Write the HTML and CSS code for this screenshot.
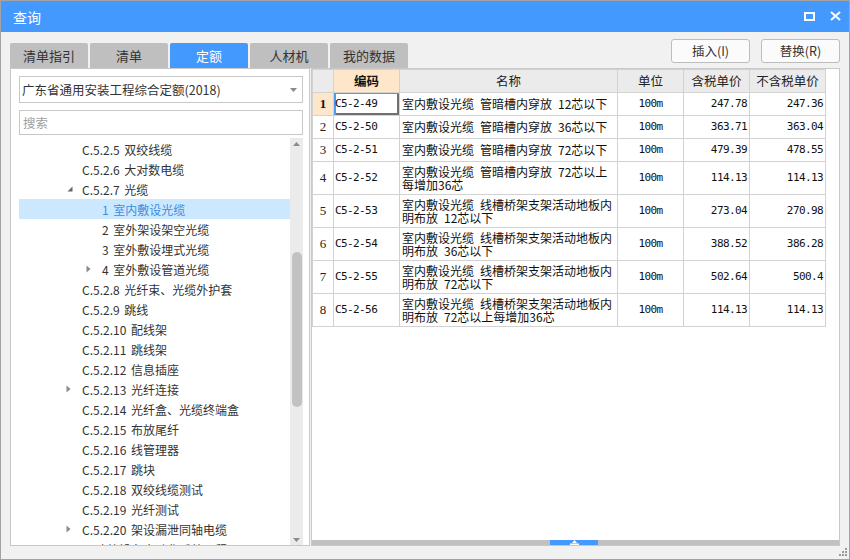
FILE: index.html
```html
<!DOCTYPE html>
<html lang="zh">
<head>
<meta charset="utf-8">
<title>查询</title>
<link rel="stylesheet" href="styles.css">
</head>
<body>
<div class="window">
  <div class="titlebar">
    <span class="title">查询</span>
    <div class="win-ctrls">
      <svg class="ic-max" width="11" height="9" viewBox="0 0 11 9"><rect x="1" y="1" width="9" height="7" fill="none" stroke="#fff" stroke-width="2"/></svg>
      <svg class="ic-close" width="11" height="10" viewBox="0 0 11 10"><path d="M1 1 L10 9 M10 1 L1 9" stroke="#fff" stroke-width="2" fill="none"/></svg>
    </div>
  </div>
  <div class="toolbar">
    <div class="tabs">
      <div class="tab">清单指引</div>
      <div class="tab">清单</div>
      <div class="tab active">定额</div>
      <div class="tab">人材机</div>
      <div class="tab">我的数据</div>
    </div>
    <div class="buttons">
      <div class="btn">插入(I)</div>
      <div class="btn">替换(R)</div>
    </div>
  </div>
  <div class="main">
    <div class="left-panel">
      <div class="combo">
        <span>广东省通用安装工程综合定额(2018)</span>
        <svg class="combo-arrow" width="7" height="4" viewBox="0 0 7 4"><path d="M0 0 H7 L3.5 4 Z" fill="#8a8a8a"/></svg>
      </div>
      <div class="search"><span>搜索</span></div>
      <div class="tree">
        <div class="tree-list">
          <div class="row lv3"><i class="arrow"></i><span>C.5.2.5 双绞线缆</span></div>
          <div class="row lv3"><i class="arrow"></i><span>C.5.2.6 大对数电缆</span></div>
          <div class="row lv3"><i class="arrow"><svg width="6" height="6" viewBox="0 0 6 6"><path d="M5.5 0.5 V5.5 H0.5 Z" fill="#666"/></svg></i><span>C.5.2.7 光缆</span></div>
          <div class="row lv4 selected"><i class="arrow"></i><span>1 室内敷设光缆</span></div>
          <div class="row lv4"><i class="arrow"></i><span>2 室外架设架空光缆</span></div>
          <div class="row lv4"><i class="arrow"></i><span>3 室外敷设埋式光缆</span></div>
          <div class="row lv4"><i class="arrow"><svg class="col" width="5" height="8" viewBox="0 0 5 8"><path d="M0.5 0.5 L4.5 4 L0.5 7.5 Z" fill="#8a8a8a"/></svg></i><span>4 室外敷设管道光缆</span></div>
          <div class="row lv3"><i class="arrow"></i><span>C.5.2.8 光纤束、光缆外护套</span></div>
          <div class="row lv3"><i class="arrow"></i><span>C.5.2.9 跳线</span></div>
          <div class="row lv3"><i class="arrow"></i><span>C.5.2.10 配线架</span></div>
          <div class="row lv3"><i class="arrow"></i><span>C.5.2.11 跳线架</span></div>
          <div class="row lv3"><i class="arrow"></i><span>C.5.2.12 信息插座</span></div>
          <div class="row lv3"><i class="arrow"><svg class="col" width="5" height="8" viewBox="0 0 5 8"><path d="M0.5 0.5 L4.5 4 L0.5 7.5 Z" fill="#8a8a8a"/></svg></i><span>C.5.2.13 光纤连接</span></div>
          <div class="row lv3"><i class="arrow"></i><span>C.5.2.14 光纤盒、光缆终端盒</span></div>
          <div class="row lv3"><i class="arrow"></i><span>C.5.2.15 布放尾纤</span></div>
          <div class="row lv3"><i class="arrow"></i><span>C.5.2.16 线管理器</span></div>
          <div class="row lv3"><i class="arrow"></i><span>C.5.2.17 跳块</span></div>
          <div class="row lv3"><i class="arrow"></i><span>C.5.2.18 双绞线缆测试</span></div>
          <div class="row lv3"><i class="arrow"></i><span>C.5.2.19 光纤测试</span></div>
          <div class="row lv3"><i class="arrow"><svg class="col" width="5" height="8" viewBox="0 0 5 8"><path d="M0.5 0.5 L4.5 4 L0.5 7.5 Z" fill="#8a8a8a"/></svg></i><span>C.5.2.20 架设漏泄同轴电缆</span></div>
          <div class="row lv2"><i class="arrow"></i><span>C.5.3 建筑设备自动化系统工程</span></div>
        </div>
        <div class="vscroll">
          <svg class="sb-arrow" width="7" height="4" viewBox="0 0 7 4"><path d="M0 4 H7 L3.5 0 Z" fill="#8a8a8a"/></svg>
          <div class="sb-track"><div class="sb-thumb"></div></div>
          <svg class="sb-arrow" width="7" height="4" viewBox="0 0 7 4"><path d="M0 0 H7 L3.5 4 Z" fill="#8a8a8a"/></svg>
        </div>
      </div>
    </div>
    <div class="right-panel">
      <div class="grid-area">
        <table class="grid">
          <colgroup>
            <col class="c-no"><col class="c-code"><col class="c-name"><col class="c-unit"><col class="c-price"><col class="c-price2">
          </colgroup>
          <thead>
            <tr>
              <th class="corner"></th>
              <th class="hl">编码</th>
              <th>名称</th>
              <th>单位</th>
              <th>含税单价</th>
              <th>不含税单价</th>
            </tr>
          </thead>
          <tbody>
            <tr>
              <td class="no hl">1</td>
              <td class="code focus">C5-2-49</td>
              <td class="name">室内敷设光缆&ensp;管暗槽内穿放&ensp;12芯以下</td>
              <td class="unit">100m</td>
              <td class="num">247.78</td>
              <td class="num">247.36</td>
            </tr>
            <tr>
              <td class="no">2</td>
              <td class="code">C5-2-50</td>
              <td class="name">室内敷设光缆&ensp;管暗槽内穿放&ensp;36芯以下</td>
              <td class="unit">100m</td>
              <td class="num">363.71</td>
              <td class="num">363.04</td>
            </tr>
            <tr>
              <td class="no">3</td>
              <td class="code">C5-2-51</td>
              <td class="name">室内敷设光缆&ensp;管暗槽内穿放&ensp;72芯以下</td>
              <td class="unit">100m</td>
              <td class="num">479.39</td>
              <td class="num">478.55</td>
            </tr>
            <tr class="tall">
              <td class="no">4</td>
              <td class="code">C5-2-52</td>
              <td class="name"><div class="l">室内敷设光缆&ensp;管暗槽内穿放&ensp;72芯以上</div><div class="l">每增加36芯</div></td>
              <td class="unit">100m</td>
              <td class="num">114.13</td>
              <td class="num">114.13</td>
            </tr>
            <tr class="tall">
              <td class="no">5</td>
              <td class="code">C5-2-53</td>
              <td class="name"><div class="l">室内敷设光缆&ensp;线槽桥架支架活动地板内</div><div class="l">明布放&ensp;12芯以下</div></td>
              <td class="unit">100m</td>
              <td class="num">273.04</td>
              <td class="num">270.98</td>
            </tr>
            <tr class="tall">
              <td class="no">6</td>
              <td class="code">C5-2-54</td>
              <td class="name"><div class="l">室内敷设光缆&ensp;线槽桥架支架活动地板内</div><div class="l">明布放&ensp;36芯以下</div></td>
              <td class="unit">100m</td>
              <td class="num">388.52</td>
              <td class="num">386.28</td>
            </tr>
            <tr class="tall">
              <td class="no">7</td>
              <td class="code">C5-2-55</td>
              <td class="name"><div class="l">室内敷设光缆&ensp;线槽桥架支架活动地板内</div><div class="l">明布放&ensp;72芯以下</div></td>
              <td class="unit">100m</td>
              <td class="num">502.64</td>
              <td class="num">500.4</td>
            </tr>
            <tr class="tall">
              <td class="no">8</td>
              <td class="code">C5-2-56</td>
              <td class="name"><div class="l">室内敷设光缆&ensp;线槽桥架支架活动地板内</div><div class="l">明布放&ensp;72芯以上每增加36芯</div></td>
              <td class="unit">100m</td>
              <td class="num">114.13</td>
              <td class="num">114.13</td>
            </tr>
          </tbody>
        </table>
      </div>
      <div class="hbar">
        <div class="handle">
          <svg width="9" height="5" viewBox="0 0 9 5"><path d="M4.5 0 L7 3 H2 Z M0 3.5 H9 V5 H0 Z" fill="#fff"/></svg>
        </div>
      </div>
    </div>
  </div>
  <div class="footer">
    <svg class="grip" width="9" height="9" viewBox="0 0 9 9">
      <rect x="6" y="0" width="2" height="2" fill="#9a9a9a"/>
      <rect x="3" y="3" width="2" height="2" fill="#9a9a9a"/>
      <rect x="6" y="3" width="2" height="2" fill="#9a9a9a"/>
      <rect x="0" y="6" width="2" height="2" fill="#9a9a9a"/>
      <rect x="3" y="6" width="2" height="2" fill="#9a9a9a"/>
      <rect x="6" y="6" width="2" height="2" fill="#9a9a9a"/>
    </svg>
  </div>
</div>
</body>
</html>
```

FILE: styles.css
```css
* { box-sizing: border-box; }
html, body { margin: 0; padding: 0; }
body {
  width: 850px;
  height: 560px;
  overflow: hidden;
  font-family: "Noto Sans CJK SC", "Noto Sans", sans-serif;
  font-size: 12px;
  color: #333;
  background: #f0f0f0;
}
.window {
  width: 850px;
  height: 560px;
  border: 1px solid #a3a3a3;
  background: #f1f1f1;
  display: flex;
  flex-direction: column;
}
.titlebar {
  height: 31px;
  flex: none;
  background: #4499ff;
  display: flex;
  align-items: center;
  padding: 0 8px 0 12px;
}
.title {
  color: #fff;
  font-size: 14px;
  line-height: 20px;
}
.win-ctrls {
  margin-left: auto;
  display: flex;
  align-items: center;
  gap: 15px;
  margin-top: -1px;
}
.toolbar {
  height: 36px;
  flex: none;
  display: flex;
  align-items: flex-start;
  padding: 0 9px;
}
.tabs {
  display: flex;
  gap: 2px;
  margin-top: 11px;
}
.tab {
  width: 78px;
  height: 25px;
  background: #bfbfbf;
  border-radius: 2px 2px 0 0;
  color: #333;
  font-size: 13px;
  line-height: 25px;
  text-align: center;
}
.tab.active {
  background: #4499ff;
  color: #fff;
}
.buttons {
  margin-left: auto;
  margin-top: 7px;
  display: flex;
  gap: 11px;
}
.btn {
  width: 79px;
  height: 24px;
  border: 1px solid #bdbdbd;
  border-radius: 3px;
  background: #fbfbfb;
  text-align: center;
  line-height: 22px;
  font-size: 12.5px;
  color: #333;
}
.main {
  height: 478px;
  flex: none;
  display: flex;
  padding: 0 9px;
  gap: 1px;
}
.left-panel {
  width: 300px;
  height: 478px;
  border: 1px solid #c8c8c8;
  background: #fff;
  padding: 7px 6px 0 8px;
  display: flex;
  flex-direction: column;
}
.combo {
  height: 27px;
  flex: none;
  border: 1px solid #c8c8c8;
  display: flex;
  align-items: center;
  padding: 0 5px 0 2px;
  font-size: 12.5px;
  color: #333;
}
.combo-arrow { margin-left: auto; }
.search {
  height: 25px;
  flex: none;
  margin-top: 7px;
  border: 1px solid #c8c8c8;
  display: flex;
  align-items: center;
  padding-left: 3px;
  color: #a0a0a0;
  font-size: 12.5px;
}
.tree {
  flex: 1;
  margin-top: 3px;
  display: flex;
  min-height: 0;
  overflow: hidden;
}
.tree-list {
  flex: 1;
  padding-top: 1px;
  overflow: hidden;
}
.row {
  height: 20px;
  display: flex;
  align-items: center;
  white-space: nowrap;
  color: #333;
  font-size: 12px;
  word-spacing: 2px;
}
.row.lv2 { padding-left: 28px; }
.row.lv3 { padding-left: 47px; }
.row.lv4 { padding-left: 67px; }
.row.selected {
  background: #cce8ff;
  color: #3b8de0;
}
.arrow {
  width: 16px;
  height: 20px;
  flex: none;
  display: flex;
  align-items: center;
  padding-left: 1px;
}
.arrow .col { margin-left: -1px; }
.vscroll {
  width: 13px;
  flex: none;
  background: #ebebeb;
  display: flex;
  flex-direction: column;
  align-items: center;
  padding: 4px 0 3px;
}
.sb-arrow { flex: none; }
.sb-track {
  flex: 1;
  width: 100%;
  padding: 0 1px 0 2px;
}
.sb-thumb {
  margin-top: 106px;
  height: 155px;
  background: #c2c2c2;
  border-radius: 5px;
}
.right-panel {
  width: 529px;
  height: 478px;
  border: 1px solid #c8c8c8;
  background: #fff;
  display: flex;
  flex-direction: column;
}
.grid-area {
  flex: 1;
  overflow: hidden;
}
.grid {
  border-collapse: collapse;
  table-layout: fixed;
  width: 513px;
  font-size: 12px;
  color: #111;
}
.c-no { width: 21px; }
.c-code { width: 66px; }
.c-name { width: 218px; }
.c-unit { width: 66px; }
.c-price { width: 66px; }
.c-price2 { width: 76px; }
.grid th, .grid td {
  border: 1px solid #d2d2d2;
  padding: 0;
  height: 23px;
  line-height: 14px;
  white-space: nowrap;
  overflow: hidden;
}
.grid th {
  background: #ebebeb;
  font-weight: normal;
  text-align: center;
  font-size: 12.5px;
  color: #222;
}
.grid th.hl {
  background: #fde6c9;
  font-weight: bold;
  color: #111;
}
.grid tr.tall td { height: 33px; }
.grid td.no {
  text-align: center;
  font-family: "Liberation Serif", serif;
  font-size: 13px;
  color: #222;
}
.grid td.no.hl {
  background: #fde6c9;
  font-weight: bold;
  color: #111;
}
.grid td.code {
  padding-left: 1px;
  font-family: "DejaVu Sans Mono", monospace;
  font-size: 11px;
  letter-spacing: -0.6px;
}
.grid td.focus {
  box-shadow: inset 2px 1px 0 #4a9df5, inset -2px -2px 0 #707070;
}
.grid td.name {
  padding-left: 2px;
  font-size: 12px;
}
.grid td.name .l {
  height: 13px;
  line-height: 13px;
}
.grid td.unit {
  text-align: center;
  font-family: "DejaVu Sans Mono", monospace;
  font-size: 11px;
  letter-spacing: -0.6px;
}
.grid td.num {
  text-align: right;
  padding-right: 2px;
  font-family: "DejaVu Sans Mono", monospace;
  font-size: 11px;
  letter-spacing: -0.6px;
}
.hbar {
  height: 5px;
  flex: none;
  background: #c0c0c0;
  position: relative;
}
.handle {
  position: absolute;
  left: 238px;
  top: 0;
  width: 48px;
  height: 5px;
  background: #4499ff;
  display: flex;
  justify-content: center;
  align-items: flex-end;
}
.handle svg { display: block; }
.footer {
  flex: 1;
  display: flex;
  justify-content: flex-end;
  align-items: flex-start;
  padding: 2px 1px 0 0;
}
.grip { display: block; }
```
